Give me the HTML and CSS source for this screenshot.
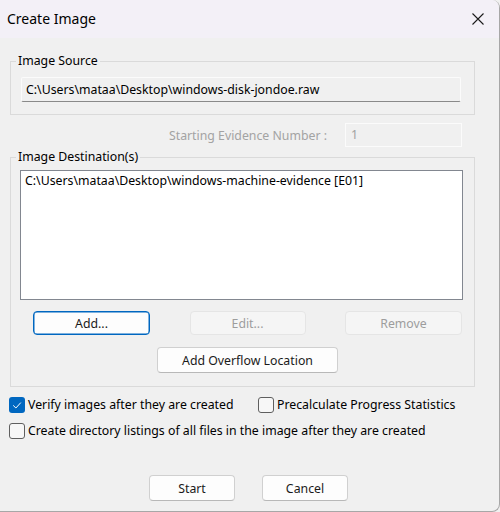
FILE: index.html
```html
<!DOCTYPE html>
<html>
<head>
<meta charset="utf-8">
<title>Create Image</title>
<link rel="stylesheet" href="styles.css">
</head>
<body>
<div class="window">
  <div class="titlebar">
    <span class="title">Create Image</span>
    <span class="close">
      <svg width="12" height="12" viewBox="0 0 12 12"><path d="M0.5 0.5 L11.5 11.5 M11.5 0.5 L0.5 11.5" stroke="#1b1b1b" stroke-width="1.1" fill="none"/></svg>
    </span>
  </div>
  <div class="content">
    <section class="group group-source">
      <div class="group-title">Image Source</div>
      <div class="readonly-field">C:\Users\mataa\Desktop\windows-disk-jondoe.raw</div>
    </section>

    <div class="evidence-row">
      <span class="evidence-label">Starting Evidence Number :</span>
      <div class="disabled-field">1</div>
    </div>

    <section class="group group-dest">
      <div class="group-title">Image Destination(s)</div>
      <div class="listbox">
        <div class="list-item">C:\Users\mataa\Desktop\windows-machine-evidence [E01]</div>
      </div>
      <div class="btn-row">
        <button class="btn btn-focus btn-small">Add...</button>
        <button class="btn btn-disabled btn-mid">Edit...</button>
        <button class="btn btn-disabled btn-small">Remove</button>
      </div>
      <div class="overflow-row">
        <button class="btn btn-overflow">Add Overflow Location</button>
      </div>
    </section>

    <div class="options">
      <div class="opt-row">
        <label class="check check-first"><span class="box box-checked"><svg width="16" height="16" viewBox="0 0 16 16"><path d="M4.2 8.4 L6.9 11 L11.8 5.6" stroke="#ffffff" stroke-width="1" fill="none"/></svg></span>Verify images after they are created</label>
        <label class="check"><span class="box"></span>Precalculate Progress Statistics</label>
      </div>
      <div class="opt-row">
        <label class="check"><span class="box"></span>Create directory listings of all files in the image after they are created</label>
      </div>
    </div>

    <div class="footer">
      <button class="btn btn-footer">Start</button>
      <button class="btn btn-footer">Cancel</button>
    </div>
  </div>
</div>
</body>
</html>
```

FILE: styles.css
```css
* { box-sizing: border-box; }

html, body {
  margin: 0;
  padding: 0;
  background: #f0f0f0;
}

body {
  font-family: "Noto Sans", "Open Sans", sans-serif;
  font-size: 12.3px;
  color: #000;
}

.window {
  width: 500px;
  height: 512px;
  background: #f0f0f0;
  border-right: 1px solid #a7a7a7;
  border-bottom: 1px solid #a7a7a7;
  border-radius: 0 8px 8px 0;
  overflow: hidden;
}

.titlebar {
  height: 38px;
  background: #f3f0f7;
  display: flex;
  align-items: center;
  justify-content: space-between;
  padding: 0 15px 0 7px;
}

.title {
  font-size: 14px;
  color: #000;
  line-height: 20px;
}

.close {
  display: flex;
  width: 12px;
  height: 12px;
}

.content {
  padding-left: 10px;
}

.group {
  width: 465px;
  border: 1px solid #dadada;
}

.group-title {
  width: fit-content;
  margin-top: -9px;
  padding: 0 2px;
  background: #f0f0f0;
  line-height: 16px;
  height: 16px;
  white-space: nowrap;
}

.group-source {
  margin-top: 23px;
  padding: 0 13px 12px 10px;
}

.group-source .group-title {
  margin-left: -5px;
}

.readonly-field {
  margin-top: 8px;
  height: 25px;
  width: 440px;
  border: 1px solid #fbfbfb;
  border-bottom-color: #8a8a8a;
  border-radius: 2px;
  background: #f0f0f0;
  padding-left: 4px;
  line-height: 23px;
  white-space: nowrap;
}

.evidence-row {
  margin-top: 8px;
  width: 452px;
  height: 24px;
  display: flex;
  justify-content: flex-end;
  align-items: center;
}

.evidence-label {
  color: #a3a3a3;
  margin-right: 18px;
}

.disabled-field {
  width: 117px;
  height: 24px;
  border: 1px solid #fbfbfb;
  background: #f0f0f0;
  color: #a0a0a0;
  padding-left: 5px;
  line-height: 22px;
}

.group-dest {
  margin-top: 10px;
  padding: 0 11px 13px 9px;
}

.group-dest .group-title {
  margin-left: -4px;
}

.listbox {
  margin-top: 5px;
  width: 443px;
  height: 130px;
  background: #ffffff;
  border: 1px solid #828790;
  padding: 2px 4px;
}

.list-item {
  line-height: 16px;
  white-space: nowrap;
}

.btn {
  font-family: inherit;
  font-size: 12.3px;
  color: #1a1a1a;
  background: #fdfdfd;
  border: 1px solid #d0d0d0;
  border-bottom-color: #b8b8b8;
  border-radius: 4px;
  padding: 0;
  margin: 0;
}

.btn-row {
  margin: 11px 0 0 13px;
  width: 429px;
  display: flex;
  justify-content: space-between;
}

.btn-small { width: 117px; height: 24px; }
.btn-mid { width: 116px; height: 24px; }

.btn-focus {
  border: 1px solid #0067c0;
  box-shadow: inset 0 0 0 0.5px #0067c0;
}

.btn-disabled {
  background: #f5f5f5;
  border: 1px solid #e5e5e5;
  color: #9d9d9d;
}

.overflow-row {
  margin: 12px 0 0 137px;
}

.btn-overflow {
  width: 181px;
  height: 26px;
  display: block;
}

.options {
  margin-left: -1px;
}

.opt-row {
  display: flex;
  align-items: center;
  height: 16px;
  margin-top: 10px;
}

.check {
  display: flex;
  align-items: center;
  white-space: nowrap;
  line-height: 16px;
}

.check-first {
  width: 249px;
  flex: none;
}

.box {
  width: 16px;
  height: 16px;
  flex: none;
  border: 1px solid #5f5f5f;
  border-radius: 3px;
  background: #f7f7f7;
  margin-right: 3px;
  display: flex;
}

.box-checked {
  border: none;
  background: #0067c0;
}

.footer {
  margin: 36px 0 0 139px;
  display: flex;
  gap: 27px;
}

.btn-footer {
  width: 86px;
  height: 26px;
}
```
